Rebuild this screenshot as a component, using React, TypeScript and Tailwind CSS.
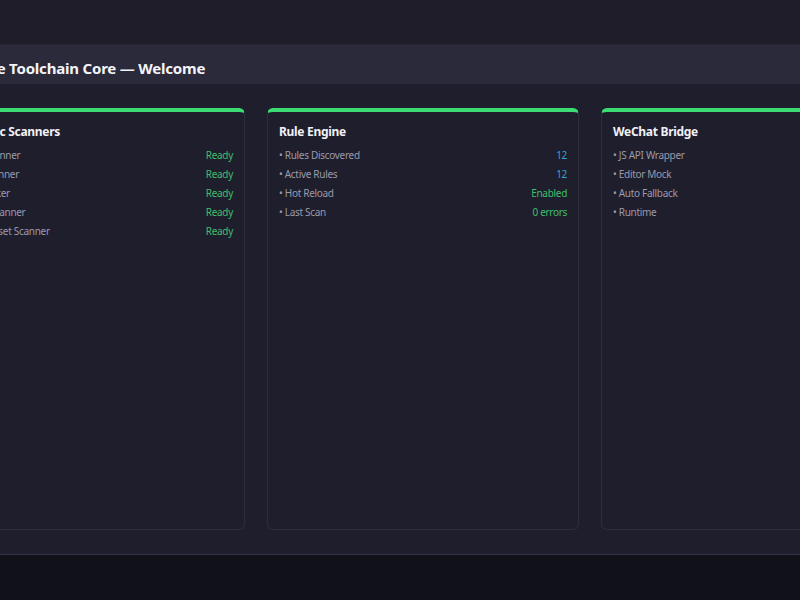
const cards = [
  {
    title: "Diagnostic Scanners",
    rows: [
      ["Shader Scanner", "Ready", "green"],
      ["Layout Scanner", "Ready", "green"],
      ["Style Checker", "Ready", "green"],
      ["Material Scanner", "Ready", "green"],
      ["Remote Asset Scanner", "Ready", "green"],
    ],
  },
  {
    title: "Rule Engine",
    rows: [
      ["Rules Discovered", "12", "blue"],
      ["Active Rules", "12", "blue"],
      ["Hot Reload", "Enabled", "green"],
      ["Last Scan", "0 errors", "green"],
    ],
  },
  {
    title: "WeChat Bridge",
    rows: [
      ["JS API Wrapper", "Ready", "green"],
      ["Editor Mock", "Ready", "green"],
      ["Auto Fallback", "On", "green"],
      ["Runtime", "Idle", "blue"],
    ],
  },
];

function Card({ title, rows }: { title: string; rows: string[][] }) {
  return (
    <div className="rounded-md border border-[#2e2d3f] border-t-4 border-t-[#3ddc72] bg-[#1f1e2d] px-[11px] pt-[12px]">
      <h2 className="text-[12px] font-bold leading-[16px] tracking-[-0.3px] text-[#f1f1f5]">{title}</h2>
      <ul className="mt-[6px]">
        {rows.map(([label, value, tone]) => (
          <li key={label} className="flex h-[19px] items-center justify-between text-[10px] tracking-[-0.3px]">
            <span className="text-[#9b9aab]">• {label}</span>
            <span className={tone === "blue" ? "text-[#2ea6dd]" : "text-[#3fbe6b]"}>{value}</span>
          </li>
        ))}
      </ul>
    </div>
  );
}

export default function App() {
  return (
    <div className="h-screen w-full overflow-hidden bg-[#111119] font-['Noto_Sans',sans-serif]">
      <div className="-ml-[89px] w-[1024px]">
        <div className="h-[44px] bg-[#1e1d29]" />
        <header className="flex h-[40px] items-center border-t border-[#262535] bg-[#2b2a3b] px-[16px] pt-[8px]">
          <h1 className="text-[15px] font-bold tracking-[-0.2px] text-[#f4f4f8]">Mini Game Toolchain Core — Welcome</h1>
        </header>
        <main className="grid h-[471px] grid-cols-3 gap-[22px] border-b border-[#33324a] bg-[#1f1e2d] px-[22px] pt-[24px] pb-[24px]">
          {cards.map((c) => (
            <Card key={c.title} title={c.title} rows={c.rows} />
          ))}
        </main>
      </div>
    </div>
  );
}
